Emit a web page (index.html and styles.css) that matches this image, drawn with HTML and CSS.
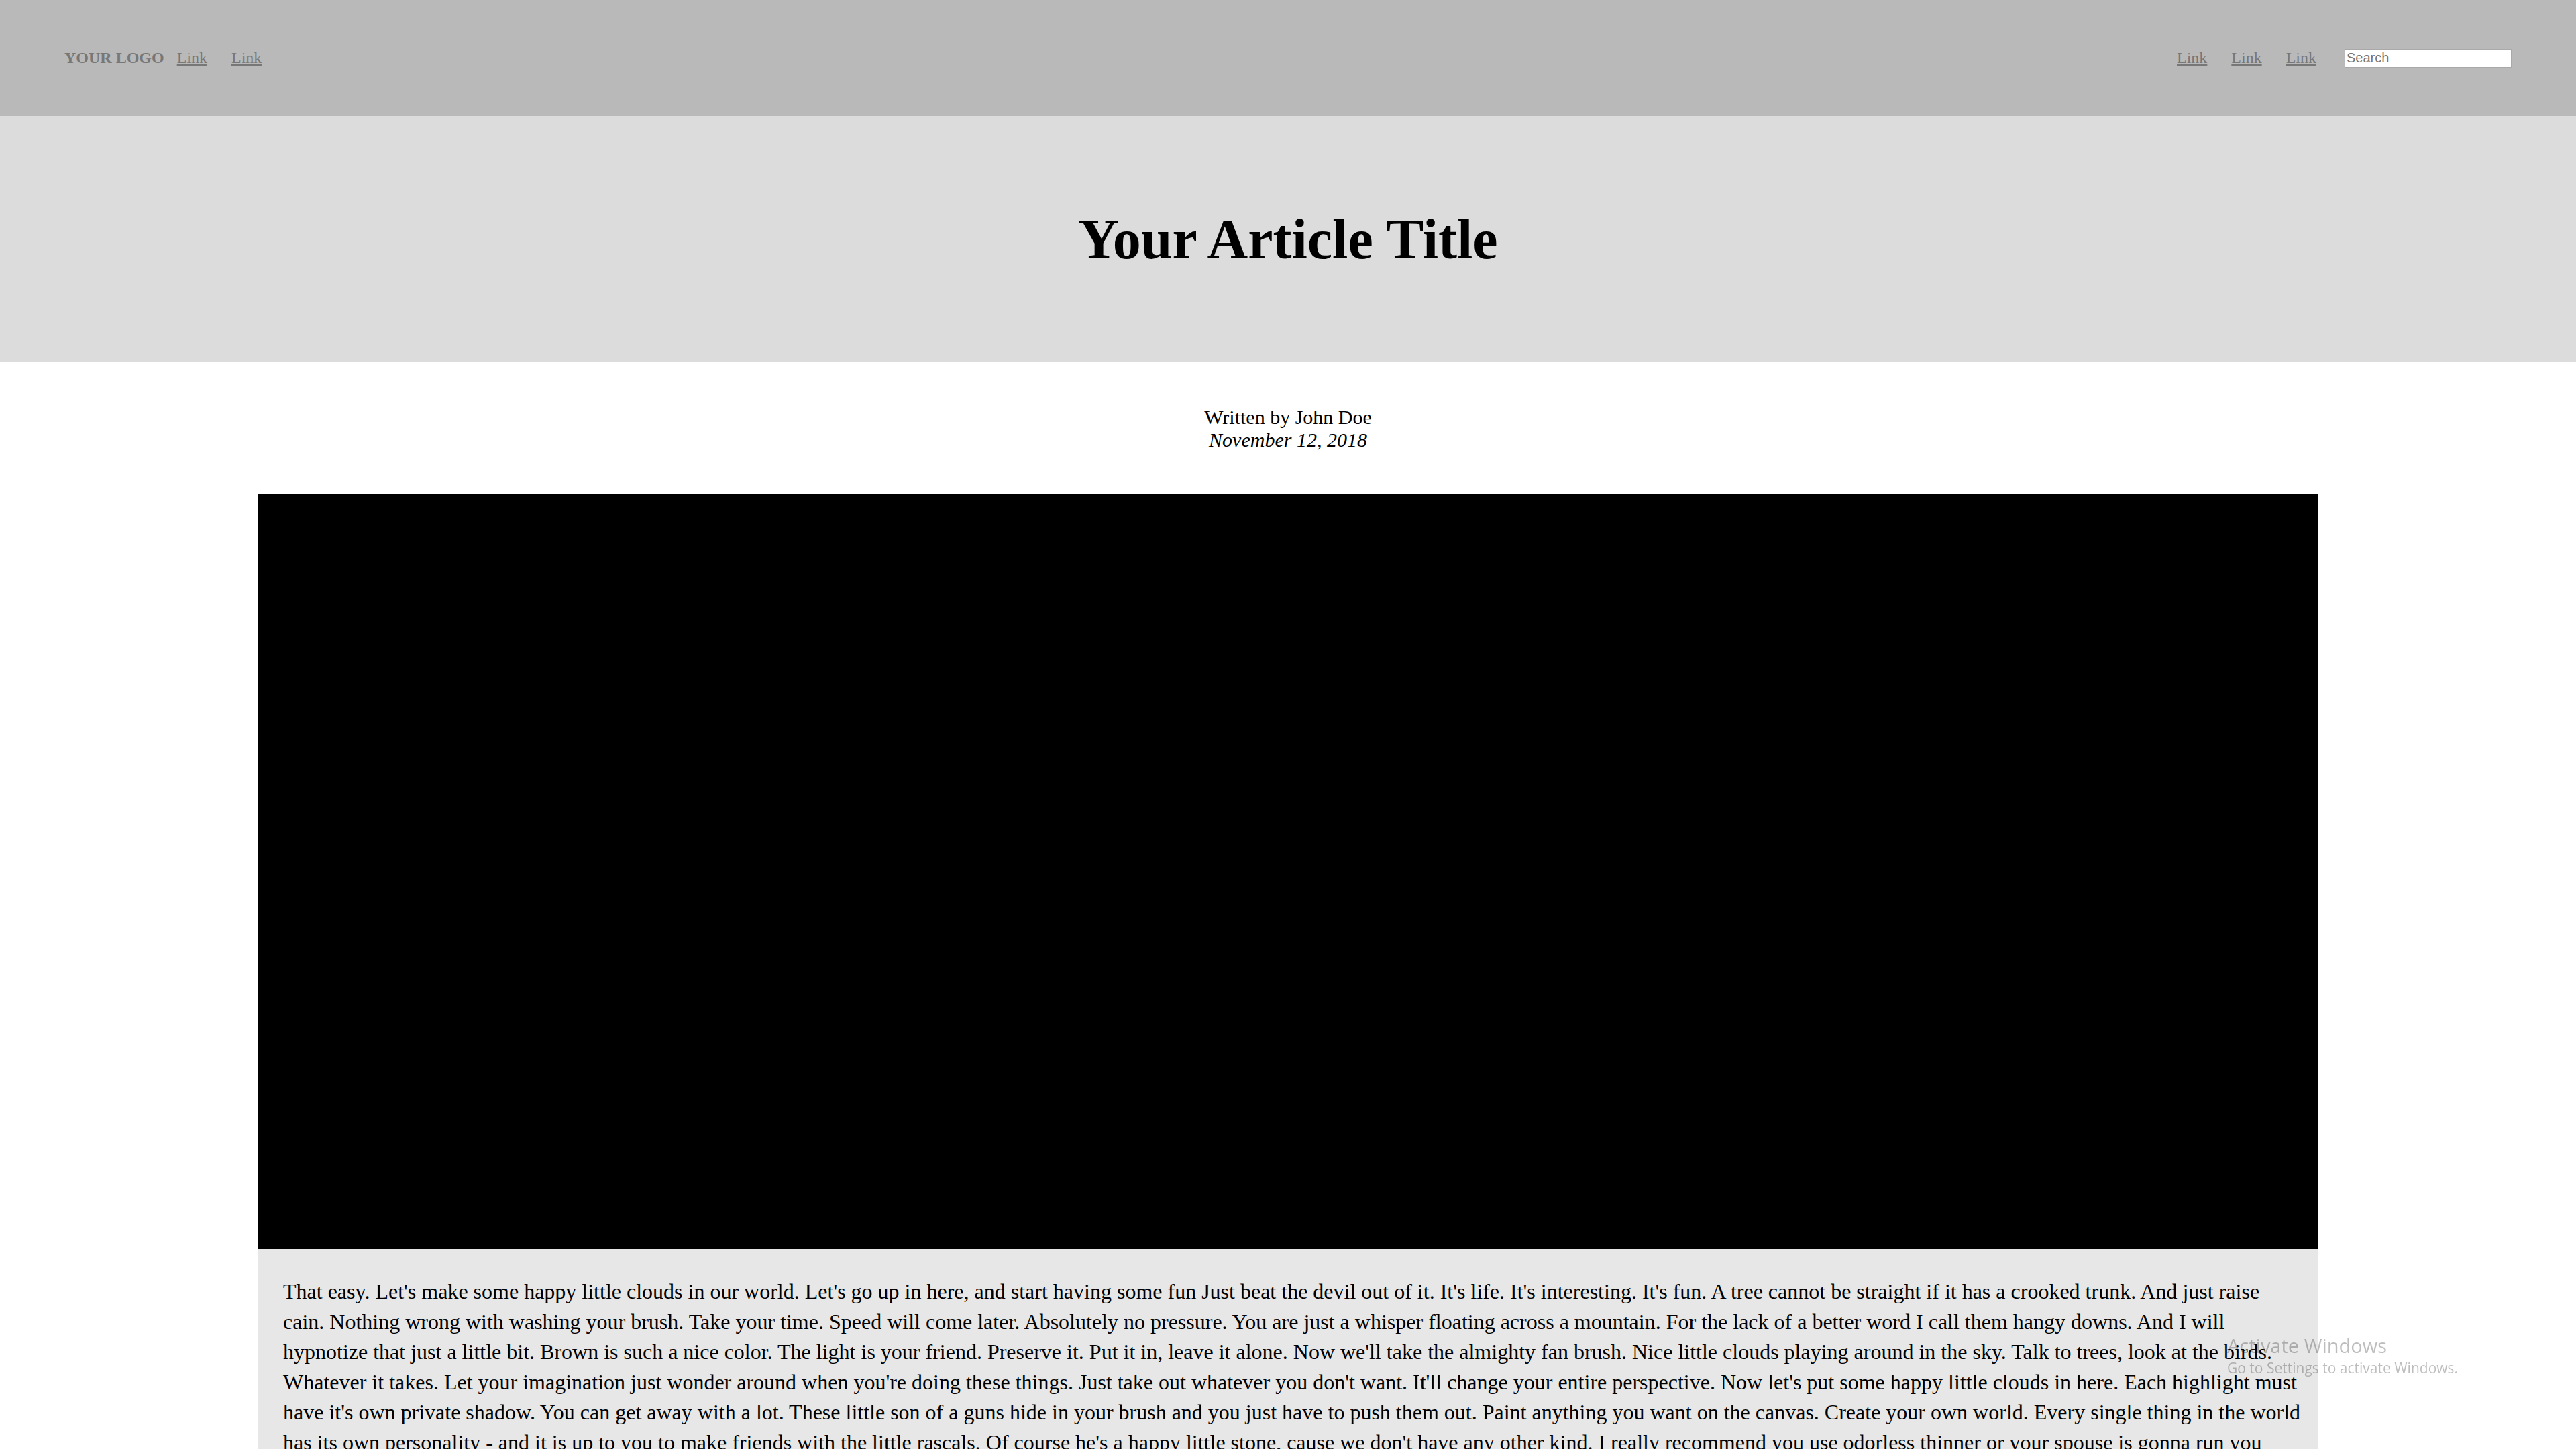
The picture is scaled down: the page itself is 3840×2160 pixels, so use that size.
FILE: index.html
```html
<!DOCTYPE html>
<html lang="en">
<head>
<meta charset="utf-8">
<title>Your Article Title</title>
<link rel="stylesheet" href="styles.css">
</head>
<body>
<header class="topbar">
  <nav class="nav-group">
    <span class="logo">YOUR LOGO</span>
    <a class="nav-link" href="#">Link</a>
    <a class="nav-link" href="#">Link</a>
  </nav>
  <nav class="nav-group">
    <a class="nav-link" href="#">Link</a>
    <a class="nav-link" href="#">Link</a>
    <a class="nav-link" href="#">Link</a>
    <input class="search" type="text" placeholder="Search">
  </nav>
</header>

<section class="hero">
  <h1 class="hero-title">Your Article Title</h1>
</section>

<div class="byline">
  <div class="author">Written by John Doe</div>
  <div class="date">November 12, 2018</div>
</div>

<main class="article">
  <div class="media"></div>
  <div class="article-body">
    <p class="article-text">That easy. Let's make some happy little clouds in our world. Let's go up in here, and start having some fun Just beat the devil out of it. It's life. It's interesting. It's fun. A tree cannot be straight if it has a crooked trunk. And just raise cain. Nothing wrong with washing your brush. Take your time. Speed will come later. Absolutely no pressure. You are just a whisper floating across a mountain. For the lack of a better word I call them hangy downs. And I will hypnotize that just a little bit. Brown is such a nice color. The light is your friend. Preserve it. Put it in, leave it alone. Now we'll take the almighty fan brush. Nice little clouds playing around in the sky. Talk to trees, look at the birds. Whatever it takes. Let your imagination just wonder around when you're doing these things. Just take out whatever you don't want. It'll change your entire perspective. Now let's put some happy little clouds in here. Each highlight must have it's own private shadow. You can get away with a lot. These little son of a guns hide in your brush and you just have to push them out. Paint anything you want on the canvas. Create your own world. Every single thing in the world has its own personality - and it is up to you to make friends with the little rascals. Of course he's a happy little stone, cause we don't have any other kind. I really recommend you use odorless thinner or your spouse is gonna run you right out the door. We don't make mistakes we just have happy little accidents. There are no limits in this world. Let's get crazy.</p>
  </div>
</main>

<div class="watermark">
  <div class="wm-title">Activate Windows</div>
  <div class="wm-sub">Go to Settings to activate Windows.</div>
</div>
</body>
</html>
```

FILE: styles.css
```css
html, body {
  margin: 0;
  padding: 0;
  background: #ffffff;
}

body {
  font-family: "Liberation Serif", "Times New Roman", serif;
  color: #000000;
}

.topbar {
  height: 173px;
  box-sizing: border-box;
  padding: 0 96px;
  background: #b9b9b9;
  display: flex;
  align-items: center;
  justify-content: space-between;
}

.nav-group {
  display: flex;
  align-items: center;
}

.logo {
  font-size: 24px;
  font-weight: bold;
  color: #777777;
  margin-right: 1px;
}

.nav-link {
  font-size: 24px;
  color: #777777;
  text-decoration: underline;
  padding: 0 18px;
}

.search {
  box-sizing: border-box;
  width: 249px;
  height: 28px;
  margin-left: 24px;
  padding: 0 2px;
  border: 1px solid #a9a9a9;
  background: #ffffff;
  font-family: "Liberation Sans", Arial, sans-serif;
  font-size: 20px;
  color: #333333;
  outline: none;
}

.search::placeholder {
  color: #757575;
}

.hero {
  background: #dcdcdc;
  height: 367px;
  display: flex;
  align-items: center;
  justify-content: center;
}

.hero-title {
  margin: 0;
  font-size: 84px;
  font-weight: bold;
  line-height: 92px;
}

.byline {
  text-align: center;
  font-size: 30px;
  padding: 65px 0 64px;
}

.date {
  font-style: italic;
}

.article {
  width: 3072px;
  margin: 0 auto;
}

.media {
  height: 1125px;
  background: #000000;
}

.article-body {
  background: #e7e7e7;
  padding: 41px 24px 40px 38px;
}

.article-text {
  margin: 0;
  font-size: 32px;
  line-height: 45px;
}

.watermark {
  position: fixed;
  left: 3320px;
  top: 1988px;
  font-family: "Open Sans", "Noto Sans", sans-serif;
  color: rgba(0, 0, 0, 0.26);
  pointer-events: none;
}

.wm-title {
  font-size: 29px;
  line-height: 36px;
}

.wm-sub {
  font-size: 21px;
  line-height: 30px;
}
```
